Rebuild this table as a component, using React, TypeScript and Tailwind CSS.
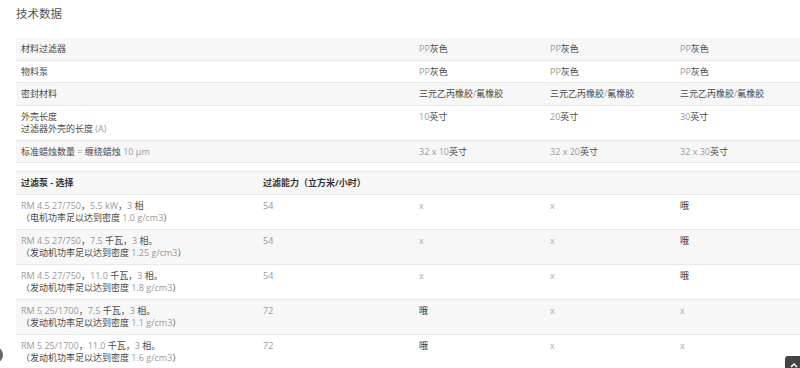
import React from 'react';

const font = { fontFamily: '"Open Sans", "Noto Sans CJK SC", sans-serif' };

// CJK runs darker, latin runs lighter, like the original page's font fallback
function Txt({ s }: { s: string }) {
  const parts = s.split(/([\u3000-\u303f\u4e00-\u9fff\uff00-\uffef]+)/).filter(Boolean);
  return (
    <>
      {parts.map((p, i) =>
        /[\u3000-\u303f\u4e00-\u9fff\uff00-\uffef]/.test(p) ? (
          <span key={i} className="text-[#4a4a4a]">{p}</span>
        ) : (
          <span key={i} className="text-[#999]">{p}</span>
        )
      )}
    </>
  );
}

const specs = [
  { label: ['材料过滤器'], vals: ['PP灰色', 'PP灰色', 'PP灰色'] },
  { label: ['物料泵'], vals: ['PP灰色', 'PP灰色', 'PP灰色'] },
  { label: ['密封材料'], vals: ['三元乙丙橡胶/氟橡胶', '三元乙丙橡胶/氟橡胶', '三元乙丙橡胶/氟橡胶'] },
  { label: ['外壳长度', '过滤器外壳的长度 (A)'], vals: ['10英寸', '20英寸', '30英寸'] },
  { label: ['标准蜡烛数量 = 缠绕蜡烛 10 μm'], vals: ['32 x 10英寸', '32 x 20英寸', '32 x 30英寸'] },
];

const pumps = [
  { name: 'RM 4.5 27/750，5.5 kW，3 相', note: '（电机功率足以达到密度 1.0 g/cm3）', cap: '54', marks: ['x', 'x', '哦'] },
  { name: 'RM 4.5 27/750，7.5 千瓦，3 相。', note: '（发动机功率足以达到密度 1.25 g/cm3）', cap: '54', marks: ['x', 'x', '哦'] },
  { name: 'RM 4.5 27/750，11.0 千瓦，3 相。', note: '（发动机功率足以达到密度 1.8 g/cm3）', cap: '54', marks: ['x', 'x', '哦'] },
  { name: 'RM 5 25/1700，7.5 千瓦，3 相。', note: '（发动机功率足以达到密度 1.1 g/cm3）', cap: '72', marks: ['哦', 'x', 'x'] },
  { name: 'RM 5 25/1700，11.0 千瓦，3 相。', note: '（发动机功率足以达到密度 1.6 g/cm3）', cap: '72', marks: ['哦', 'x', 'x'] },
];

const cell = 'px-[5px] pt-[5px] pb-[4px]';

export default function App() {
  return (
    <div className="min-h-[368px] bg-white text-[9px] leading-[12.5px]" style={font}>
      <div className="pl-[16px]">
        <h2 className="pt-[6px] pb-[16px] text-[11.5px] leading-[16px] text-[#555] font-normal">技术数据</h2>

        {/* spec table */}
        <div>
          {specs.map((row, i) => (
            <div
              key={i}
              className={`grid grid-cols-[398px_131px_130px_125px] border-b border-[#e8e8e8] ${i % 2 === 0 ? 'bg-[#f7f7f7]' : 'bg-white'}`}
            >
              <div className={cell}>
                {row.label.map((l, j) => (
                  <div key={j}><Txt s={l} /></div>
                ))}
              </div>
              {row.vals.map((v, j) => (
                <div key={j} className={cell}><Txt s={v} /></div>
              ))}
            </div>
          ))}
        </div>

        {/* pump table */}
        <div className="mt-[8px] border-t border-[#e8e8e8]">
          <div className="grid grid-cols-[242px_156px_131px_130px_125px] bg-[#f7f7f7] border-b border-[#e8e8e8] font-bold text-[#333]">
            <div className={cell}>过滤泵 - 选择</div>
            <div className={cell}>过滤能力（立方米/小时）</div>
            <div className={cell}></div>
            <div className={cell}></div>
            <div className={cell}></div>
          </div>
          {pumps.map((p, i) => (
            <div
              key={i}
              className={`grid grid-cols-[242px_156px_131px_130px_125px] border-b border-[#e8e8e8] ${i % 2 === 1 ? 'bg-[#f7f7f7]' : 'bg-white'}`}
            >
              <div className={cell}>
                <div><Txt s={p.name} /></div>
                <div><Txt s={p.note} /></div>
              </div>
              <div className={cell}><Txt s={p.cap} /></div>
              {p.marks.map((m, j) => (
                <div key={j} className={cell}>
                  {m === 'x' ? <span className="text-[#aaa]">x</span> : <span className="text-[#333]">{m}</span>}
                </div>
              ))}
            </div>
          ))}
        </div>
      </div>

      {/* floating bits at the window edges */}
      <div className="fixed left-[-13px] top-[347px] w-[16px] h-[16px] rounded-full bg-[#666]" />
      <div className="fixed left-[785px] top-[356px] w-[40px] h-[40px] rounded-[3px] bg-[#444] flex items-start justify-start p-[4px]">
        <svg width="10" height="10" viewBox="0 0 10 10" fill="none" stroke="#fff" strokeWidth="1.5">
          <path d="M2 7 L5 4 L8 7" />
        </svg>
      </div>
    </div>
  );
}
